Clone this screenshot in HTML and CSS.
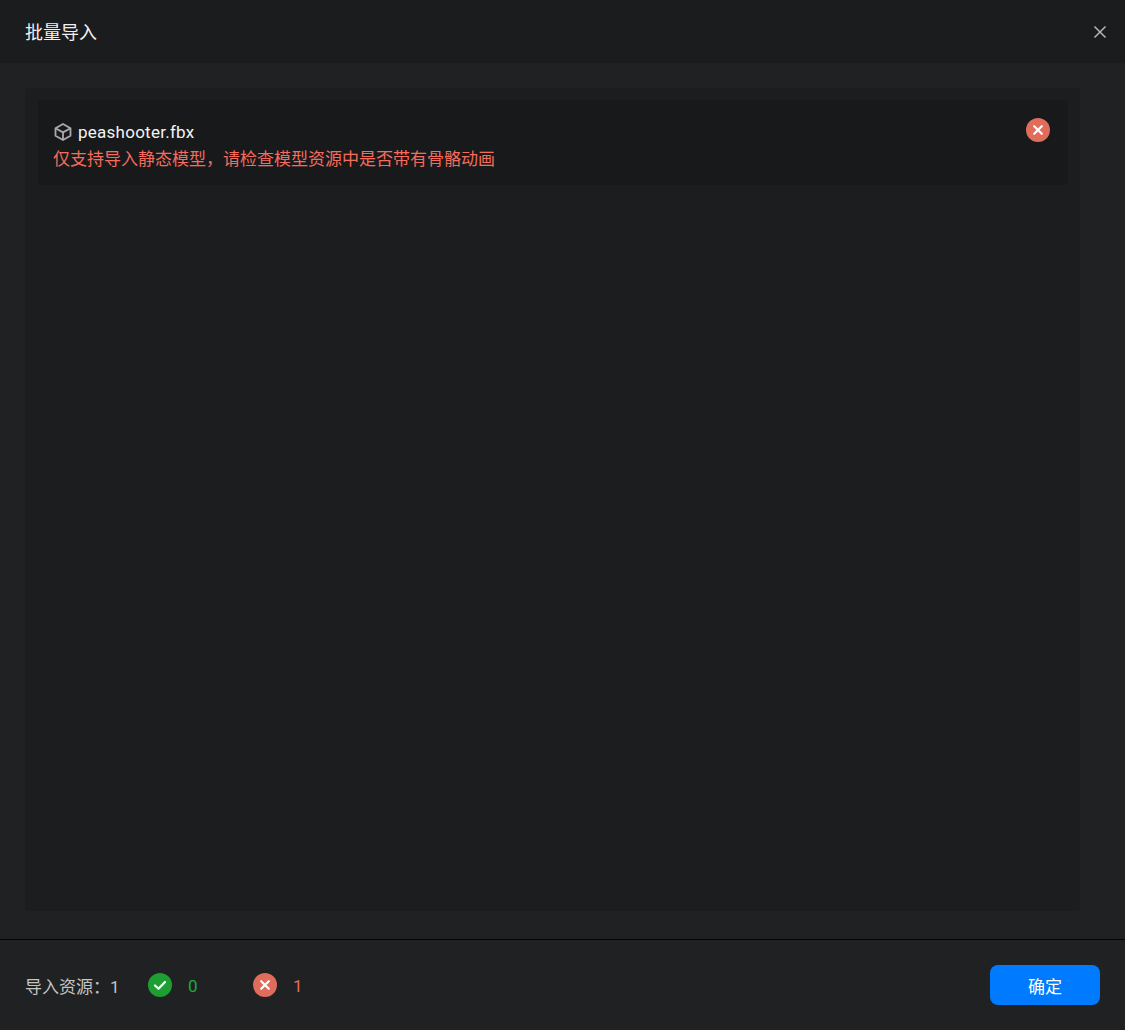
FILE: index.html
```html
<!DOCTYPE html>
<html lang="zh-CN">
<head>
<meta charset="utf-8">
<title>批量导入</title>
<link rel="stylesheet" href="styles.css">
</head>
<body>
<div class="dialog">
  <header class="head">
    <h1 class="title">批量导入</h1>
    <button class="close" aria-label="关闭">
      <svg class="close-icon" viewBox="0 0 14 14"><path d="M1.500 1.500l11 11M12.500 1.500l-11 11"/></svg>
    </button>
  </header>
  <main class="body">
    <div class="panel">
      <div class="item">
        <div class="item-text">
          <div class="file">
            <svg class="cube" viewBox="0 0 18 18"><path d="M9 1l7.500 4.200v7.600L9 17l-7.500-4.200V5.200z"/><path d="M1.500 5.200L9 9.400l7.500-4.200M9 9.400V17"/></svg>
            <span>peashooter.fbx</span>
          </div>
          <div class="error">仅支持导入静态模型，请检查模型资源中是否带有骨骼动画</div>
        </div>
        <svg class="badge" viewBox="0 0 24 24"><circle class="bad" cx="12" cy="12" r="12"/><path class="mark" d="M8.200 8.200l7.600 7.600M15.800 8.200l-7.600 7.600"/></svg>
      </div>
    </div>
  </main>
  <footer class="foot">
    <div class="stats">
      <span class="total">导入资源：1</span>
      <span class="stat stat-ok">
        <svg class="badge" viewBox="0 0 24 24"><circle class="good" cx="12" cy="12" r="12"/><path class="mark" d="M7 12.500l3.500 3.300 6.500-6.800"/></svg>
        <span class="count">0</span>
      </span>
      <span class="stat stat-bad">
        <svg class="badge" viewBox="0 0 24 24"><circle class="bad" cx="12" cy="12" r="12"/><path class="mark" d="M8.200 8.200l7.600 7.600M15.800 8.200l-7.600 7.600"/></svg>
        <span class="count">1</span>
      </span>
    </div>
    <button class="confirm">确定</button>
  </footer>
</div>
</body>
</html>
```
FILE: styles.css
```css
* { box-sizing: border-box; }
html, body { margin: 0; height: 100%; }
body {
  background: #202123;
  font-family: Roboto, "Noto Sans CJK SC", sans-serif;
  color: #e6e6e6;
}
.dialog { display: flex; flex-direction: column; height: 1030px; }
.head {
  height: 63px;
  flex: none;
  background: #1b1c1e;
  display: flex;
  align-items: center;
  justify-content: space-between;
  padding: 0 18px 0 25px;
}
.title { margin: 0; padding-top: 2px; font-size: 18px; font-weight: 400; color: #f0f0f0; line-height: 26px; }
.close { background: none; border: 0; padding: 0; width: 14px; height: 14px; display: block; }
.close-icon { display: block; width: 14px; height: 14px; fill: none; stroke: #b5b6b7; stroke-width: 1.500; }
.body { flex: 1; padding: 25px 45px 28px 25px; min-height: 0; }
.panel { height: 100%; background: #1c1d1f; border-radius: 4px; padding: 12px 12px 12px 13px; }
.item {
  height: 85px;
  background: #18191b;
  border-radius: 4px;
  padding: 18px 18px 0 15px;
  display: flex;
  justify-content: space-between;
  align-items: flex-start;
}
.item-text { padding-top: 1px; }
.file { display: flex; align-items: center; gap: 6px; font-size: 17px; letter-spacing: 0.25px; line-height: 26px; color: #f4f4f4; margin: 0 0 1px 1px; }
.cube { width: 18px; height: 18px; fill: none; stroke: #a9aaab; stroke-width: 1.800; stroke-linejoin: round; }
.error { font-size: 17px; line-height: 26px; color: #f56c5c; }
.badge { width: 24px; height: 24px; flex: none; display: block; }
.bad { fill: #e06c5c; }
.good { fill: #1e9e32; }
.mark { fill: none; stroke: #fff; stroke-width: 2.200; stroke-linecap: round; stroke-linejoin: round; }
.foot {
  height: 91px;
  flex: none;
  border-top: 1px solid #050505;
  display: flex;
  align-items: center;
  justify-content: space-between;
  padding: 0 25px;
}
.stats { display: flex; align-items: center; font-size: 17px; color: #c4c4c5; }
.total { width: 123px; }
.stat { display: flex; align-items: center; gap: 16px; width: 105px; }
.count { padding-top: 2px; }
.stat-ok { color: #22aa3a; }
.stat-bad { color: #e06c5c; }
.confirm {
  width: 110px;
  height: 40px;
  border: 0;
  border-radius: 8px;
  background: #007bff;
  color: #fff;
  font: inherit;
  font-size: 17px;
}
```
